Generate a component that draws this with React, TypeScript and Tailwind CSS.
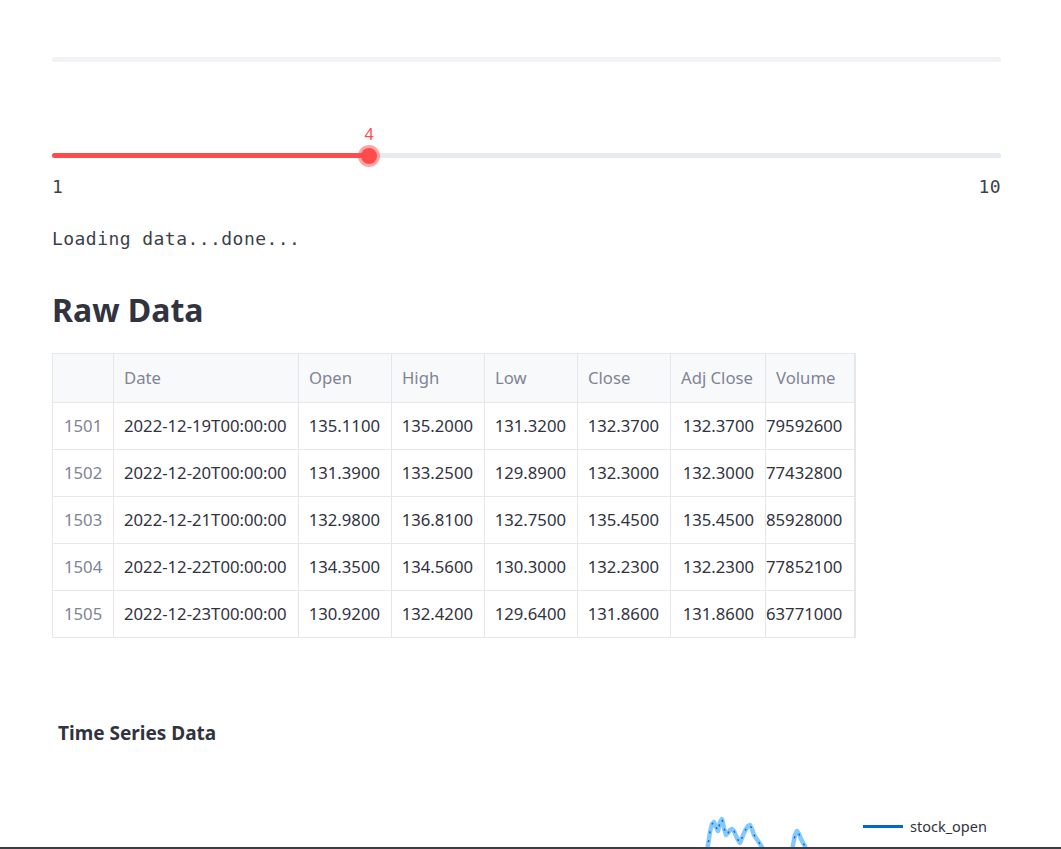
import React from 'react'

type Row = {
  idx: number
  date: string
  open: string
  high: string
  low: string
  close: string
  adj: string
  volume: string
}

const ROWS: Row[] = [
  { idx: 1501, date: '2022-12-19T00:00:00', open: '135.1100', high: '135.2000', low: '131.3200', close: '132.3700', adj: '132.3700', volume: '79592600' },
  { idx: 1502, date: '2022-12-20T00:00:00', open: '131.3900', high: '133.2500', low: '129.8900', close: '132.3000', adj: '132.3000', volume: '77432800' },
  { idx: 1503, date: '2022-12-21T00:00:00', open: '132.9800', high: '136.8100', low: '132.7500', close: '135.4500', adj: '135.4500', volume: '85928000' },
  { idx: 1504, date: '2022-12-22T00:00:00', open: '134.3500', high: '134.5600', low: '130.3000', close: '132.2300', adj: '132.2300', volume: '77852100' },
  { idx: 1505, date: '2022-12-23T00:00:00', open: '130.9200', high: '132.4200', low: '129.6400', close: '131.8600', adj: '131.8600', volume: '63771000' },
]

const COLS = [
  { key: 'date', label: 'Date', w: 185 },
  { key: 'open', label: 'Open', w: 93 },
  { key: 'high', label: 'High', w: 93 },
  { key: 'low', label: 'Low', w: 93 },
  { key: 'close', label: 'Close', w: 93 },
  { key: 'adj', label: 'Adj Close', w: 95 },
  { key: 'volume', label: 'Volume', w: 89 },
] as const

// chart points in page coords, y shifted by 747 for the svg
const SERIES_A: [number, number][] = [
  [706, 860], [708, 845], [710, 832], [712, 824], [714, 822], [716, 827], [718, 831],
  [720, 822], [722, 819], [724, 828], [726, 835], [728, 833], [730, 830], [732, 829],
  [734, 831], [736, 836], [738, 840], [740, 843], [742, 838], [744, 833], [746, 829],
  [748, 826], [750, 825], [752, 829], [754, 835], [756, 838], [758, 841], [760, 844],
  [762, 847], [764, 860],
]
const SERIES_B: [number, number][] = [
  [791, 860], [793, 845], [795, 835], [797, 831], [799, 834], [801, 839], [803, 843],
  [805, 846], [807, 860],
]

const toPath = (pts: [number, number][]) =>
  pts.map(([x, y], i) => `${i ? 'L' : 'M'}${x} ${y - 747}`).join(' ')

export default function App() {
  const sans = { fontFamily: '"Noto Sans", "Open Sans", sans-serif' }
  const mono = { fontFamily: '"DejaVu Sans Mono", "Liberation Mono", monospace' }

  return (
    <main className="h-[849px] w-[1061px] overflow-hidden bg-white text-[#31333f]" style={sans}>
      <div className="px-[52px]">
        {/* top bar */}
        <div className="mt-[57px] h-[5px] w-[949px] rounded-full bg-[#f0f2f6]" />

        {/* slider */}
        <div className="relative mt-[63px] h-[33px] w-[949px] pt-[28px]">
          <div className="absolute left-[317px] top-0 -translate-x-1/2 text-[16px] leading-[18px] text-[#ff4b4b]">4</div>
          <div className="relative h-[5px] w-full rounded-full bg-[#e6eaf1]">
            <div className="h-[5px] w-[317px] rounded-full bg-[#ff4b4b]" />
            <div className="absolute left-[317px] top-[2.5px] h-[22px] w-[22px] -translate-x-1/2 -translate-y-1/2 rounded-full bg-[#ff4b4b]/50" />
            <div className="absolute left-[317px] top-[2.5px] h-[16px] w-[16px] -translate-x-1/2 -translate-y-1/2 rounded-full bg-[#ff4b4b]" />
          </div>
        </div>
        <div className="mt-[18px] flex w-[949px] justify-between text-[18px] leading-[22px] tracking-[0.4px] text-[#3d3f4a]" style={mono}>
          <span>1</span>
          <span>10</span>
        </div>

        <p className="mt-[30px] text-[18px] leading-[22px] tracking-[0.45px] text-[#3d3f4a]" style={mono}>
          Loading data...done...
        </p>

        <h2 className="mt-[38px] text-[32px] font-bold leading-[44px] text-[#31333f]">Raw Data</h2>

        {/* dataframe */}
        <table className="mt-[21px] table-fixed border-collapse border border-r-2 border-[#e6e7eb] text-[16.7px] leading-[22px]">
          <colgroup>
            <col style={{ width: 61 }} />
            {COLS.map(c => <col key={c.key} style={{ width: c.w }} />)}
          </colgroup>
          <thead>
            <tr className="h-[49px] bg-[#f8f9fb]">
              <th className="border border-[#e6e7eb]" />
              {COLS.map(c => (
                <th key={c.key} className="border border-[#e6e7eb] pl-[10px] text-left font-normal text-[#808495]">
                  {c.label}
                </th>
              ))}
            </tr>
          </thead>
          <tbody>
            {ROWS.map(r => (
              <tr key={r.idx} className="h-[47px]">
                <td className="border border-[#e6e7eb] pl-[11px] text-[#808495]">{r.idx}</td>
                <td className="border border-[#e6e7eb] pl-[10px] whitespace-nowrap">{r.date}</td>
                <td className="border border-[#e6e7eb] pr-[11px] text-right">{r.open}</td>
                <td className="border border-[#e6e7eb] pr-[11px] text-right">{r.high}</td>
                <td className="border border-[#e6e7eb] pr-[11px] text-right">{r.low}</td>
                <td className="border border-[#e6e7eb] pr-[11px] text-right">{r.close}</td>
                <td className="border border-[#e6e7eb] pr-[11px] text-right">{r.adj}</td>
                <td className="border border-[#e6e7eb] pr-[12px] text-right">{r.volume}</td>
              </tr>
            ))}
          </tbody>
        </table>

        <h3 className="mt-[81px] pl-[6px] text-[19px] font-bold leading-[28px]">Time Series Data</h3>
      </div>

      {/* chart area */}
      <div className="relative h-[100px] w-[1061px] overflow-hidden">
        <svg width="1061" height="100" className="absolute left-0 top-0">
          <path d={toPath(SERIES_A)} fill="none" stroke="#83c9ff" strokeWidth="4.5" strokeLinejoin="round" />
          <path d={toPath(SERIES_B)} fill="none" stroke="#83c9ff" strokeWidth="4.5" strokeLinejoin="round" />
          <path d={toPath(SERIES_A)} fill="none" stroke="#0068c9" strokeWidth="1.4" strokeDasharray="2 7" />
          <path d={toPath(SERIES_B)} fill="none" stroke="#0068c9" strokeWidth="1.4" strokeDasharray="2 9" />
        </svg>
        <div className="absolute left-[863px] top-[70px] flex items-center gap-[7px]">
          <div className="h-[3px] w-[40px] bg-[#0068c9]" />
          <span className="text-[14.5px] leading-[18px] text-[#31333f]">stock_open</span>
        </div>
      </div>
      <div className="h-[2px] w-[1061px] bg-[#3d3d45]" />
    </main>
  )
}
